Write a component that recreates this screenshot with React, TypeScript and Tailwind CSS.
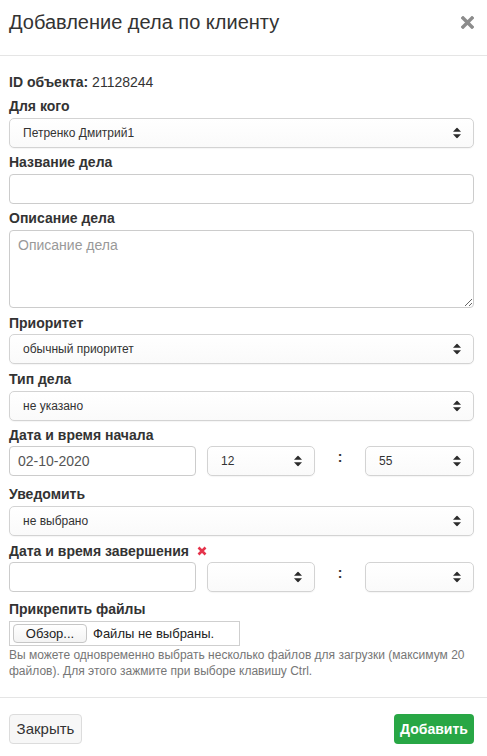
import React from 'react';

const font = { fontFamily: '"Liberation Sans", Arial, sans-serif' };

const Arrows: React.FC = () => (
  <svg className="pointer-events-none absolute right-[13px] top-1/2 -translate-y-1/2" width="8" height="11" viewBox="0 0 8 11">
    <path d="M4 0 L8 4.2 L0 4.2 Z" fill="#2b2b2b" />
    <path d="M4 11 L8 6.8 L0 6.8 Z" fill="#2b2b2b" />
  </svg>
);

interface SelectProps {
  value: string;
  className?: string;
}

const FakeSelect: React.FC<SelectProps> = ({ value, className }) => (
  <div className={`relative h-[30px] ${className ?? ''}`}>
    <div className="flex h-full items-center rounded-[5px] border border-[#d3d3d3] bg-gradient-to-b from-white to-[#fafafa] pl-[13px] text-[12px] text-[#333] shadow-[0_1px_1px_rgba(0,0,0,0.04)]">
      {value}
    </div>
    <Arrows />
  </div>
);

const Label: React.FC<{ children: React.ReactNode; className?: string }> = ({ children, className }) => (
  <div className={`text-[14px] font-bold leading-[20px] text-[#333] ${className ?? ''}`}>{children}</div>
);

const TimeRow: React.FC<{ date: string; hour: string; minute: string }> = ({ date, hour, minute }) => (
  <div className="flex h-[30px] items-center">
    <div className="flex h-full w-[187px] items-center rounded-[4px] border border-[#ccc] bg-white pl-[8px] text-[14px] text-[#555]">
      {date}
    </div>
    <FakeSelect value={hour} className="ml-[11px] w-[108px]" />
    <div className="flex w-[50px] justify-center pb-[8px] text-[14px] font-bold text-[#333]">:</div>
    <FakeSelect value={minute} className="w-[109px]" />
  </div>
);

const App: React.FC = () => {
  return (
    <div className="h-[756px] w-[487px] overflow-hidden bg-white text-[#333]" style={font}>
      <div className="flex h-[56px] items-start justify-between border-b border-[#e5e5e5] pl-[9px] pr-[13px] pt-[8px]">
        <h4 className="text-[20px] leading-[28px] text-[#333]">Добавление дела по клиенту</h4>
        <svg className="mt-[8px]" width="13" height="13" viewBox="0 0 13 13">
          <path d="M2 2 L11 11 M11 2 L2 11" stroke="#8c8c8c" strokeWidth="3.4" strokeLinecap="square" />
        </svg>
      </div>

      <div className="flex flex-col pl-[9px] pr-[13px] pt-[16px]">
        <Label>
          ID объекта: <span className="font-normal">21128244</span>
        </Label>

        <Label className="mt-[4px] mb-[2px]">Для кого</Label>
        <FakeSelect value="Петренко Дмитрий1" />

        <Label className="mt-[4px] mb-[2px]">Название дела</Label>
        <input className="h-[30px] rounded-[4px] border border-[#ccc] bg-white px-[8px] text-[14px] outline-none" />

        <Label className="mt-[4px] mb-[2px]">Описание дела</Label>
        <textarea
          placeholder="Описание дела"
          className="block h-[78px] rounded-[4px] border border-[#ccc] bg-white px-[8px] py-[5px] text-[14px] leading-[18px] outline-none placeholder:text-[#999]"
          style={font}
        />

        <Label className="mt-[5px] mb-[1px]">Приоритет</Label>
        <FakeSelect value="обычный приоритет" />

        <Label className="mt-[5px] mb-[2px]">Тип дела</Label>
        <FakeSelect value="не указано" />

        <Label className="mt-[4px] mb-[1px]">Дата и время начала</Label>
        <TimeRow date="02-10-2020" hour="12" minute="55" />

        <Label className="mt-[8px] mb-[2px]">Уведомить</Label>
        <FakeSelect value="не выбрано" />

        <Label className="mt-[5px] mb-[1px] flex items-center">
          Дата и время завершения
          <svg className="ml-[8px]" width="10" height="10" viewBox="0 0 10 10">
            <path d="M1.5 1.5 L8.5 8.5 M8.5 1.5 L1.5 8.5" stroke="#e5334b" strokeWidth="2.6" />
          </svg>
        </Label>
        <TimeRow date="" hour="" minute="" />

        <Label className="mt-[7px] mb-[2px]">Прикрепить файлы</Label>
        <div className="flex h-[25px] w-[231px] items-center border border-[#cfcfcf] pl-[3px]">
          <button className="h-[19px] w-[74px] rounded-[4px] border border-[#c6c6c6] bg-gradient-to-b from-white to-[#f3f3f3] text-[13px] leading-[17px] text-[#222]">
            Обзор...
          </button>
          <span className="ml-[6px] text-[13px] text-[#222]">Файлы не выбраны.</span>
        </div>
        <p className="mt-[1px] text-[12px] leading-[16px] text-[#767676]">
          Вы можете одновременно выбрать несколько файлов для загрузки (максимум 20 файлов). Для этого зажмите при выборе клавишу Ctrl.
        </p>
      </div>

      <div className="mt-[18px] flex items-start justify-between border-t border-[#e5e5e5] pl-[9px] pr-[13px] pt-[16px]">
        <button className="h-[30px] w-[73px] rounded-[4px] border border-[#dcdcdc] bg-[#f7f7f7] text-[15px] text-[#333]">
          Закрыть
        </button>
        <button className="h-[30px] w-[80px] rounded-[4px] bg-[#28a745] text-[14px] font-bold text-white">
          Добавить
        </button>
      </div>
    </div>
  );
};

export default App;
